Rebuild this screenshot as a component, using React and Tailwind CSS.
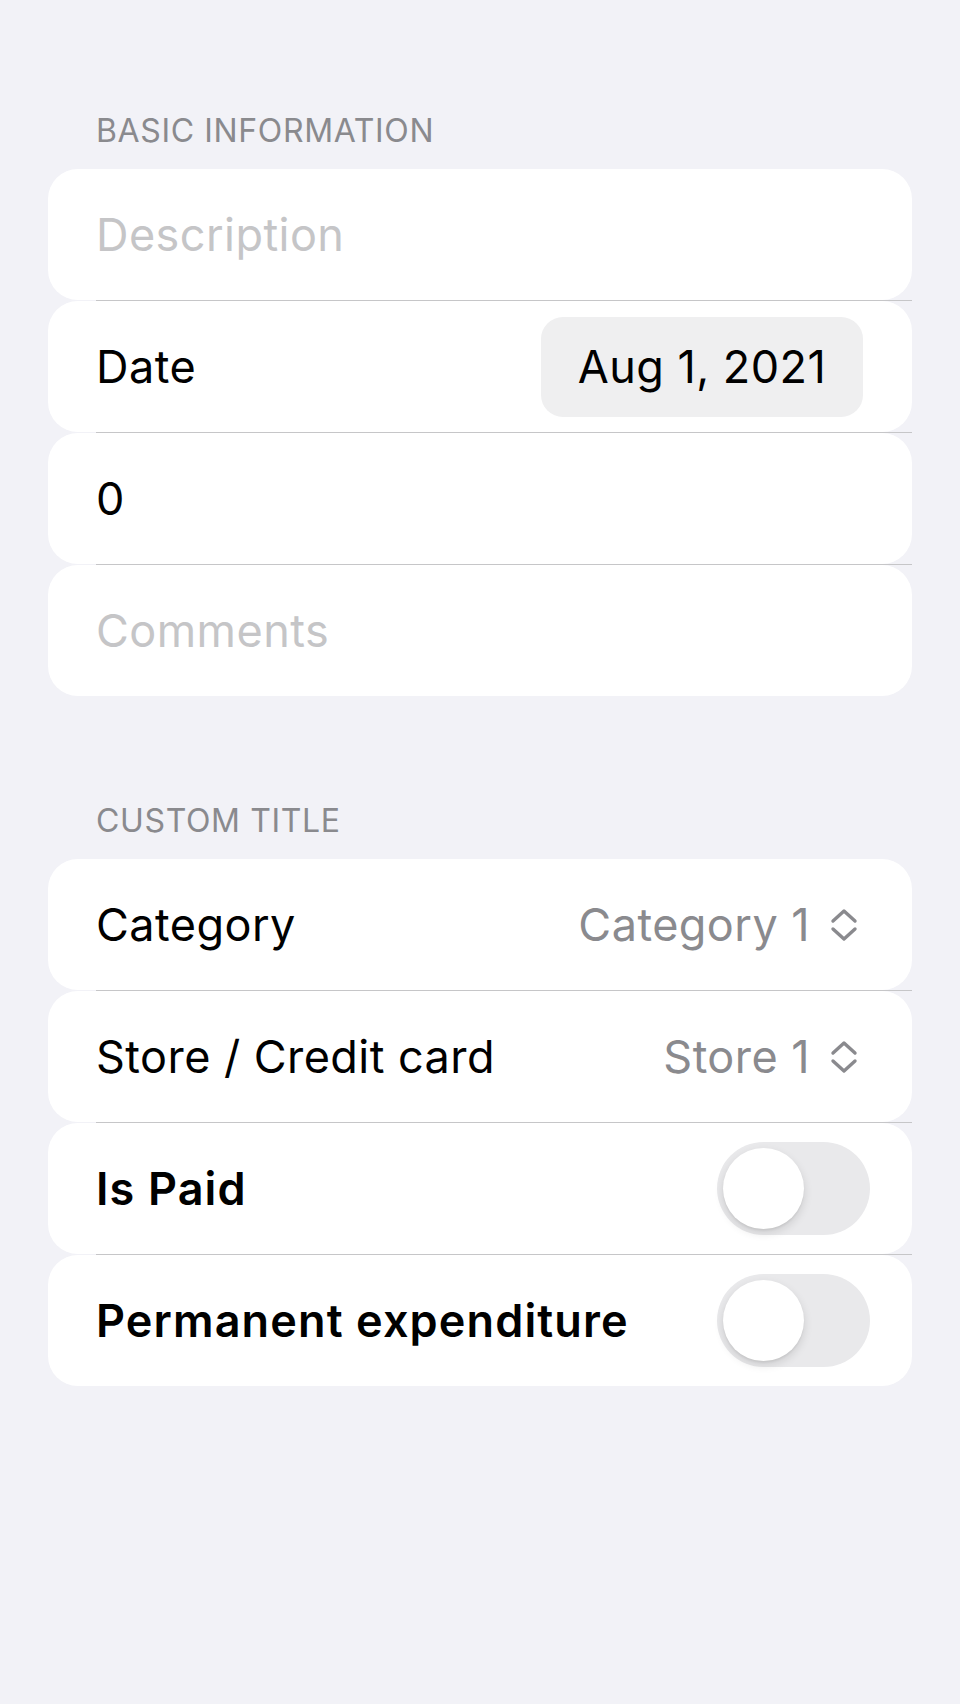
import React from 'react'

const font = { fontFamily: 'Inter, "Noto Sans", sans-serif' }

const UpDown = () => (
  <svg width="28" height="34" viewBox="0 0 28 34" fill="none" stroke="#8a8a8e" strokeWidth="3.4" strokeLinecap="round" strokeLinejoin="round">
    <path d="M3 13 L14 3 L25 13" />
    <path d="M3 21 L14 31 L25 21" />
  </svg>
)

const Toggle = () => (
  <div className="relative w-[153px] h-[93px] rounded-full bg-[#e9e9eb]">
    <div className="absolute left-[6px] top-[6px] w-[81px] h-[81px] rounded-full bg-white shadow-[0_4px_10px_rgba(0,0,0,0.12),0_2px_2px_rgba(0,0,0,0.05)]" />
  </div>
)

const Row = ({ children }) => (
  <div className="h-[131px] bg-white rounded-[30px] flex items-center justify-between pl-[48px] pr-[42px] text-[45px] tracking-[0.01em]">
    {children}
  </div>
)

const Divider = () => (
  <div className="h-px pl-[48px]">
    <div className="h-px bg-[#c6c6c8]" />
  </div>
)

const Header = ({ children }) => (
  <div className="pl-[48px] text-[32px] leading-[32px] text-[#8a8a8e] uppercase mb-[22px] tracking-[0.02em]">
    {children}
  </div>
)

export default function App() {
  return (
    <div className="min-h-[1704px] bg-[#f2f2f7] px-[48px] pt-[115px] text-black" style={font}>
      <Header>Basic Information</Header>
      <div>
        <Row>
          <span className="text-[#c5c5c7]">Description</span>
        </Row>
        <Divider />
        <Row>
          <span>Date</span>
          <div className="h-[100px] w-[322px] mr-[7px] rounded-[22px] bg-[#efeff0] flex items-center justify-center">
            Aug 1, 2021
          </div>
        </Row>
        <Divider />
        <Row>
          <span>0</span>
        </Row>
        <Divider />
        <Row>
          <span className="text-[#c5c5c7]">Comments</span>
        </Row>
      </div>

      <div className="mt-[109px]">
        <Header>Custom Title</Header>
        <Row>
          <span>Category</span>
          <div className="flex items-center gap-[20px] mr-[12px] text-[#8a8a8e]">
            <span>Category 1</span>
            <UpDown />
          </div>
        </Row>
        <Divider />
        <Row>
          <span>Store / Credit card</span>
          <div className="flex items-center gap-[20px] mr-[12px] text-[#8a8a8e]">
            <span>Store 1</span>
            <UpDown />
          </div>
        </Row>
        <Divider />
        <Row>
          <span className="font-semibold tracking-[0.025em]">Is Paid</span>
          <Toggle />
        </Row>
        <Divider />
        <Row>
          <span className="font-semibold tracking-[0.025em]">Permanent expenditure</span>
          <Toggle />
        </Row>
      </div>
    </div>
  )
}
